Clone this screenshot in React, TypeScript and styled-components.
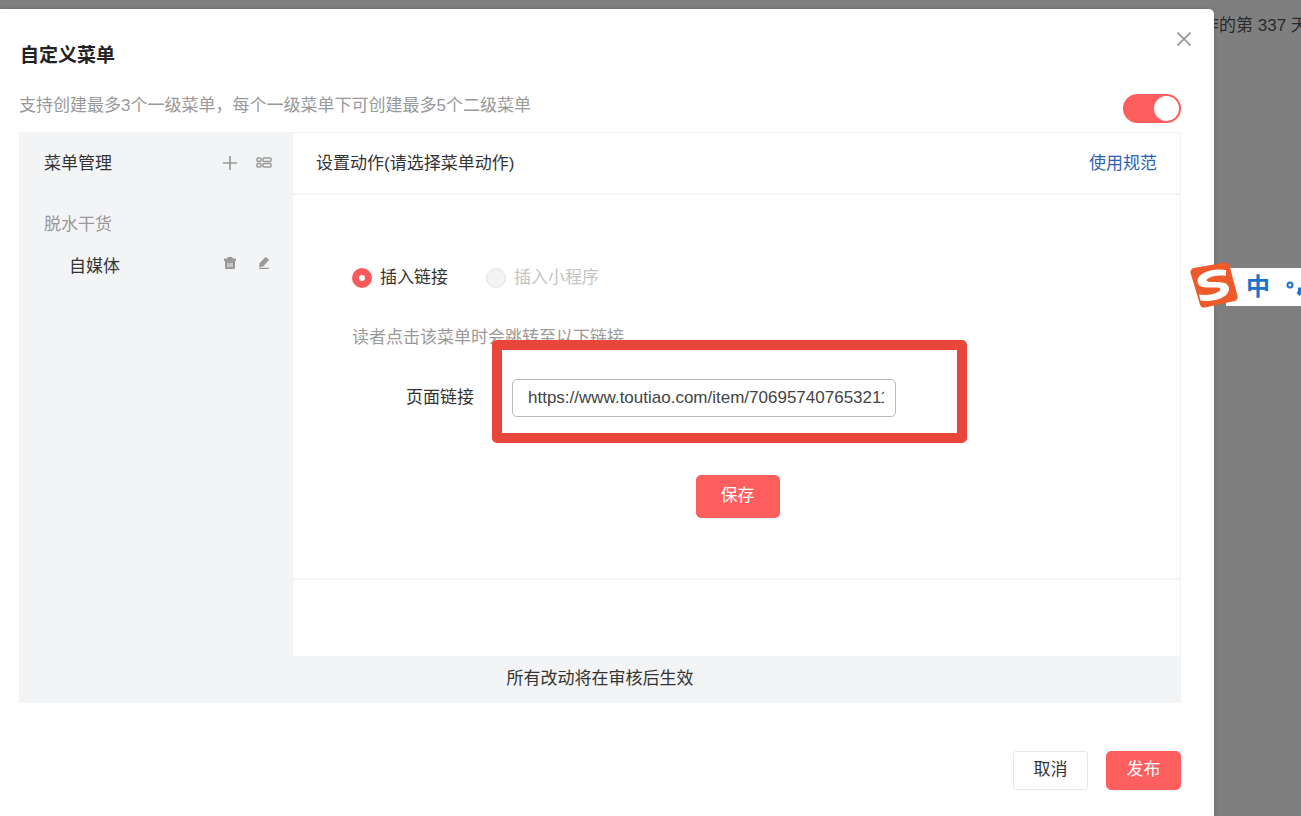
import React from "react";
import styled, { createGlobalStyle } from "styled-components";

const GlobalStyle = createGlobalStyle`
  *, *::before, *::after { box-sizing: border-box; }
  body {
    margin: 0;
    background: #7f7f7f;
    color: #333;
    font: 17px/24px "Liberation Sans", "Noto Sans CJK SC", sans-serif;
  }
  button, input { font: inherit; }
`;

const Page = styled.div`
  position: relative;
  display: flex;
  min-height: 100vh;
  padding-top: 9px;
  overflow: hidden;
`;

const Dialog = styled.section`
  flex: 1;
  min-width: 0;
  background: #fff;
  border-top-right-radius: 5px;
  box-shadow: 0 0 4px rgba(0, 0, 0, 0.2);
  z-index: 1;
`;

const Behind = styled.aside`
  width: 87px;
  overflow: hidden;
  white-space: nowrap;
  padding-top: 5px;
  color: #2b2b2b;
`;

const DayCount = styled.p`
  margin: 0 0 0 -12px;
`;

const Header = styled.header`
  display: flex;
  justify-content: space-between;
  align-items: flex-start;
  padding: 20px 20px 0;
`;

const Title = styled.h1`
  margin: 15px 0 0;
  font-size: 19px;
  line-height: 24px;
  font-weight: 700;
  color: #222;
`;

const IconButton = styled.button`
  display: flex;
  align-items: center;
  justify-content: center;
  width: 20px;
  height: 20px;
  padding: 0;
  border: 0;
  background: none;
  color: #999;
`;

const Content = styled.div`
  padding: 0 33px 26px 19px;
`;

const Intro = styled.div`
  display: flex;
  justify-content: space-between;
  align-items: flex-start;
  margin-top: 26px;
  height: 38px;
`;

const Hint = styled.p`
  margin: 0;
  color: #999;
`;

const Switch = styled.input`
  appearance: none;
  width: 58px;
  height: 29px;
  margin: 0;
  padding: 2px;
  border-radius: 15px;
  background: #ff5e5e;
  display: flex;
  justify-content: flex-end;
  &::before {
    content: "";
    width: 25px;
    height: 25px;
    border-radius: 50%;
    background: #fff;
  }
`;

const Panel = styled.div`
  display: grid;
  grid-template-columns: 273px minmax(0, 1fr);
  background: #f3f4f6;
`;

const Sidebar = styled.nav`
  padding: 0 18px 0 25px;
`;

const MenuRow = styled.div<{ $height: number; $indent?: boolean; $muted?: boolean }>`
  display: flex;
  align-items: center;
  height: ${(p) => p.$height}px;
  padding-top: 2px;
  padding-left: ${(p) => (p.$indent ? 25 : 0)}px;
  color: ${(p) => (p.$muted ? "#999" : "#333")};
`;

const Actions = styled.div<{ $raised?: boolean }>`
  display: flex;
  gap: 14px;
  margin-left: auto;
  padding-bottom: ${(p) => (p.$raised ? 8 : 3)}px;
`;

const Main = styled.div`
  background: #fff;
  border: 1px solid #f3f3f3;
  border-bottom: 0;
`;

const MainHeader = styled.div`
  display: flex;
  align-items: center;
  justify-content: space-between;
  height: 62px;
  padding: 2px 23px 0;
  border-bottom: 2px solid #f5f5f5;
`;

const RulesLink = styled.a`
  color: #2a62b5;
  text-decoration: none;
`;

const Form = styled.form`
  padding: 71px 57px 60px 59px;
  margin-bottom: 76px;
  border-bottom: 2px solid #f5f5f5;
`;

const RadioGroup = styled.div`
  display: flex;
  gap: 38px;
  margin-bottom: 36px;
`;

const RadioLabel = styled.label<{ $disabled?: boolean }>`
  display: flex;
  align-items: center;
  gap: 8px;
  color: ${(p) => (p.$disabled ? "#c4c4c4" : "#333")};
`;

const Radio = styled.input`
  appearance: none;
  width: 20px;
  height: 20px;
  margin: 0;
  border-radius: 50%;
  border: 1px solid #e2e2e2;
  background: #f3f3f3;
  &:checked {
    border: 7px solid #fa5a5c;
    background: #fff;
  }
`;

const Field = styled.div`
  display: flex;
  align-items: center;
  margin-top: 29px;
`;

const FieldLabel = styled.label`
  width: 122px;
  margin-right: 38px;
  text-align: right;
`;

const Highlighted = styled.div`
  position: relative;
  display: flex;
`;

const Marker = styled.div`
  position: absolute;
  inset: -39px -71px -26px -20px;
  border: 10px solid #e8463a;
  border-radius: 5px;
  pointer-events: none;
`;

const TextInput = styled.input`
  width: 384px;
  height: 38px;
  padding: 0 11px 0 15px;
  border: 1px solid #b9bbbb;
  border-radius: 5px;
  background: #fff;
  color: #444;
`;

const Button = styled.button<{ $primary?: boolean; $large?: boolean }>`
  min-width: ${(p) => (p.$large ? 84 : 75)}px;
  height: ${(p) => (p.$large ? 43 : 39)}px;
  padding: 0 16px 1px;
  border: 1px solid ${(p) => (p.$primary ? "#ff5e5e" : "#e8e8e8")};
  border-radius: ${(p) => (p.$primary ? 5 : 3)}px;
  background: ${(p) => (p.$primary ? "#ff5e5e" : "#fff")};
  color: ${(p) => (p.$primary ? "#fff" : "#333")};
`;

const SaveRow = styled.div`
  display: flex;
  justify-content: center;
  margin-top: 58px;
`;

const Notice = styled.p`
  grid-column: 1 / -1;
  margin: 0;
  padding: 11px 0 12px;
  text-align: center;
`;

const Footer = styled.footer`
  display: flex;
  justify-content: flex-end;
  gap: 18px;
  margin-top: 48px;
`;

const ImeBar = styled.div`
  position: absolute;
  top: 262px;
  right: 0;
  z-index: 2;
  display: flex;
  align-items: flex-start;
  width: 111px;
`;

const ImeStrip = styled.div`
  display: flex;
  align-items: center;
  flex: 1;
  height: 38px;
  margin: 6px 0 0 -12px;
  padding-left: 20px;
  background: #fff;
  overflow: hidden;
`;

const ImeMode = styled.span`
  flex: none;
  width: 24px;
  font-size: 24px;
  font-weight: 700;
  color: #1a73c9;
`;

const ImeLogo = styled.svg`
  position: relative;
  z-index: 1;
  flex: none;
`;

const ImePunctuation = styled.svg`
  flex: none;
  margin-left: 16px;
`;

export default function App() {
  return (
    <Page>
      <GlobalStyle />
      <Dialog role="dialog" aria-labelledby="dialog-title">
        <Header>
          <Title id="dialog-title">自定义菜单</Title>
          <IconButton aria-label="关闭">
            <svg width="14" height="14" viewBox="0 0 14 14" stroke="currentColor" strokeWidth="1.8">
              <path d="M.5.5l13 13M13.5.5l-13 13" />
            </svg>
          </IconButton>
        </Header>
        <Content>
          <Intro>
            <Hint>支持创建最多3个一级菜单，每个一级菜单下可创建最多5个二级菜单</Hint>
            <Switch type="checkbox" role="switch" aria-label="启用自定义菜单" defaultChecked />
          </Intro>
          <Panel>
            <Sidebar>
              <MenuRow $height={62}>
                菜单管理
                <Actions>
                  <IconButton aria-label="添加菜单">
                    <svg width="14" height="14" viewBox="0 0 14 14" stroke="currentColor" strokeWidth="1.7">
                      <path d="M7 0v14M0 7h14" />
                    </svg>
                  </IconButton>
                  <IconButton aria-label="菜单排序">
                    <svg width="16" height="11" viewBox="0 0 16 11" fill="none" stroke="currentColor" strokeWidth="1.5">
                      <rect x="1" y="1" width="4" height="3.5" rx="1" />
                      <rect x="7" y="1" width="8" height="3.5" rx="1" />
                      <rect x="1" y="6.5" width="4" height="3.5" rx="1" />
                      <rect x="7" y="6.5" width="8" height="3.5" rx="1" />
                    </svg>
                  </IconButton>
                </Actions>
              </MenuRow>
              <MenuRow $height={60} $muted>脱水干货</MenuRow>
              <MenuRow $height={24} $indent>
                自媒体
                <Actions $raised>
                  <IconButton aria-label="删除">
                    <svg width="12" height="12" viewBox="0 0 12 12" fill="currentColor" fillRule="evenodd">
                      <path d="M3.5 0h5v1.5H12V4H0V1.5h3.5zM1 4h10v7q0 1-1 1H2q-1 0-1-1zM3.5 6v4h1V6zM5.5 6v4h1V6zM7.5 6v4h1V6z" />
                    </svg>
                  </IconButton>
                  <IconButton aria-label="编辑">
                    <svg width="12" height="12" viewBox="0 0 12 12" fill="currentColor">
                      <path d="M7 .4q.7-.7 1.4 0l2.2 1.8q.6.6 0 1.3L5.2 9.4 1 10l.5-3.8z" />
                      <path d="M1 10.7h10V12H1z" />
                    </svg>
                  </IconButton>
                </Actions>
              </MenuRow>
            </Sidebar>
            <Main>
              <MainHeader>
                <span>设置动作(请选择菜单动作)</span>
                <RulesLink href="#rules">使用规范</RulesLink>
              </MainHeader>
              <Form onSubmit={(e) => e.preventDefault()}>
                <RadioGroup role="radiogroup" aria-label="菜单动作">
                  <RadioLabel>
                    <Radio type="radio" name="action" defaultChecked />
                    插入链接
                  </RadioLabel>
                  <RadioLabel $disabled>
                    <Radio type="radio" name="action" disabled />
                    插入小程序
                  </RadioLabel>
                </RadioGroup>
                <Hint>读者点击该菜单时会跳转至以下链接</Hint>
                <Field>
                  <FieldLabel htmlFor="page-url">页面链接</FieldLabel>
                  <Highlighted>
                    <TextInput id="page-url" type="text" defaultValue="https://www.toutiao.com/item/7069574076532113" />
                    <Marker />
                  </Highlighted>
                </Field>
                <SaveRow>
                  <Button type="submit" $primary $large>保存</Button>
                </SaveRow>
              </Form>
            </Main>
            <Notice>所有改动将在审核后生效</Notice>
          </Panel>
          <Footer>
            <Button>取消</Button>
            <Button $primary>发布</Button>
          </Footer>
        </Content>
      </Dialog>
      <Behind>
        <DayCount>作的第 337 天</DayCount>
      </Behind>
      <ImeBar>
        <ImeLogo width="48" height="46" viewBox="0 0 48 46">
          <path d="M4 6L35 .5q3.5-.5 4.5 3L47.500 34q.8 4-3 5L15 45.500q-4 .6-5-3L.5 11Q0 7 4 6z" fill="#ee5a2a" />
          <path
            d="M36 8C22 5.500 7 11 7.500 19.500 8 27 19 25.500 27 25.500c5 0 4 3.500 0 5-5 2.500-12 3-18 2l1.500 6C22 40.500 39.500 36 39 26.500 38.500 19.500 30 20 22 20c-6 0-7-2-3-4 5-2.500 11-3 17-2z"
            fill="#fff"
          />
        </ImeLogo>
        <ImeStrip>
          <ImeMode>中</ImeMode>
          <ImePunctuation width="16" height="20" viewBox="0 0 16 20" fill="none" stroke="#1a73c9">
            <circle cx="4" cy="8" r="2.5" strokeWidth="2" />
            <path d="M14 10.500v3q0 2-2 4" strokeWidth="4" />
          </ImePunctuation>
        </ImeStrip>
      </ImeBar>
    </Page>
  );
}
